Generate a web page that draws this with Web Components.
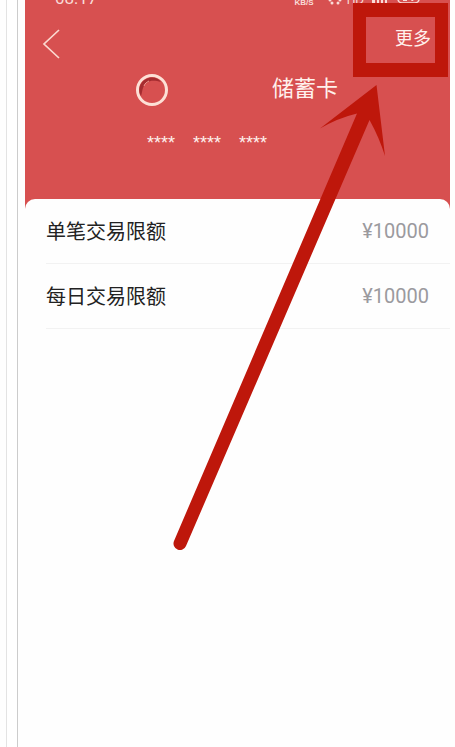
<!DOCTYPE html>
<html lang="zh-CN">
<head>
    <meta charset="UTF-8">
    <meta name="viewport" content="width=device-width, initial-scale=1.0">
    <title>储蓄卡</title>
    <style>
        body {
            margin: 0;
            background: #fefefe;
            font-family: "Liberation Sans", "Noto Sans CJK SC", sans-serif;
        }
    </style>
</head>
<body>
    <guide-page>
        <card-screen>
            <status-bar slot="header" time="08:17"></status-bar>
            <nav-bar slot="header" action="更多"></nav-bar>
            <bank-card slot="header" groups="3">储蓄卡</bank-card>
            <limit-row label="单笔交易限额" amount="¥10000"></limit-row>
            <limit-row label="每日交易限额" amount="¥10000"></limit-row>
        </card-screen>
        <guide-arrow slot="overlay"></guide-arrow>
    </guide-page>

    <script>
        // Outer frame with the two thin rules on the left
        class GuidePage extends HTMLElement {
            constructor() {
                super();
                this.attachShadow({ mode: 'open' }).innerHTML = `
                    <style>
                        :host {
                            display: flex;
                            box-sizing: border-box;
                            min-height: 100vh;
                            padding: 0 5px 0 6px;
                            overflow: hidden;
                        }
                        .rule {
                            box-sizing: border-box;
                            flex: none;
                            width: 12px;
                            margin-right: 7px;
                            border-left: 1px solid #e3e3e3;
                            border-right: 1px solid #cccccc;
                            background: #ffffff;
                        }
                        .content {
                            position: relative;
                            display: flex;
                            flex: 1;
                            min-width: 0;
                        }
                    </style>
                    <div class="rule"></div>
                    <div class="content">
                        <slot></slot>
                        <slot name="overlay"></slot>
                    </div>
                `;
            }
        }

        class CardScreen extends HTMLElement {
            constructor() {
                super();
                this.attachShadow({ mode: 'open' }).innerHTML = `
                    <style>
                        :host {
                            display: block;
                            flex: 1;
                            min-width: 0;
                        }
                        header {
                            background: #d75050;
                            padding-bottom: 54px;
                            overflow: hidden;
                        }
                        main {
                            margin-top: -10px;
                            border-radius: 10px 10px 0 0;
                            background: #fefefe;
                        }
                    </style>
                    <header><slot name="header"></slot></header>
                    <main><slot></slot></main>
                `;
            }
        }

        // Scrolled partly above the top edge
        class StatusBar extends HTMLElement {
            constructor() {
                super();
                this.attachShadow({ mode: 'open' });
            }

            connectedCallback() {
                this.shadowRoot.innerHTML = `
                    <style>
                        :host {
                            display: flex;
                            align-items: flex-end;
                            justify-content: space-between;
                            height: 24px;
                            margin-top: -16px;
                            padding: 0 30px;
                            color: #f9dcd8;
                        }
                        time {
                            font: 17px/20px Roboto, sans-serif;
                        }
                        .icons {
                            display: flex;
                            align-items: flex-end;
                            height: 24px;
                        }
                        .speed {
                            margin-right: 13px;
                            font: bold 8px/10px "Liberation Sans", sans-serif;
                        }
                        .hd {
                            margin: 0 8px 0 4px;
                            font: 12px/16px "Liberation Sans", sans-serif;
                        }
                        svg {
                            display: block;
                            fill: currentColor;
                        }
                    </style>
                    <time>${this.getAttribute('time')}</time>
                    <div class="icons">
                        <span class="speed">KB/S</span>
                        <svg width="16" height="16" viewBox="0 0 16 16">
                            <circle cx="3" cy="8" r="1.5"/>
                            <circle cx="13" cy="8" r="1.5"/>
                            <circle cx="5" cy="11" r="1.5"/>
                            <circle cx="11" cy="11" r="1.5"/>
                        </svg>
                        <span class="hd">HD</span>
                        <svg width="48" height="16" viewBox="0 0 48 16">
                            <path d="M0 8h3v3H0zM5 5h2v6H5zM9 3h2v8H9zM13 0h2v11h-2z"/>
                            <rect x="26" y="1" width="21" height="10" rx="4" fill="none" stroke="currentColor" stroke-width="1.5"/>
                            <path d="M31 5h4v4h-4zM38 5h5v1l-2 3h-2l2-3h-3z"/>
                        </svg>
                    </div>
                `;
            }
        }

        class NavBar extends HTMLElement {
            constructor() {
                super();
                this.attachShadow({ mode: 'open' });
            }

            connectedCallback() {
                this.shadowRoot.innerHTML = `
                    <style>
                        :host {
                            display: flex;
                            align-items: center;
                            justify-content: space-between;
                            height: 62px;
                            padding: 0 19px 0 17px;
                            color: #fff1ed;
                        }
                        button {
                            display: block;
                            margin: 0;
                            padding: 0 0 4px;
                            border: 0;
                            background: none;
                            color: inherit;
                            font: 18px/24px "Noto Sans CJK SC", sans-serif;
                        }
                        .back {
                            padding: 10px 0 0;
                        }
                        svg {
                            display: block;
                        }
                    </style>
                    <button class="back" aria-label="返回">
                        <svg width="20" height="32" viewBox="0 0 20 32">
                            <path d="M17 2 2 16l15 14" fill="none" stroke="#fbd9d0" stroke-width="1.7"/>
                        </svg>
                    </button>
                    <button>${this.getAttribute('action')}</button>
                `;
            }
        }

        class BankCard extends HTMLElement {
            constructor() {
                super();
                this.attachShadow({ mode: 'open' });
            }

            connectedCallback() {
                const groups = Number(this.getAttribute('groups'));

                this.shadowRoot.innerHTML = `
                    <style>
                        :host {
                            display: block;
                            padding: 0 112px 0 110px;
                            color: #fff1ed;
                        }
                        .title {
                            display: flex;
                            align-items: flex-start;
                            justify-content: space-between;
                            height: 37px;
                            margin-bottom: 24px;
                            font: 22px/32px "Noto Sans CJK SC", sans-serif;
                        }
                        .number {
                            display: flex;
                            gap: 18px;
                            padding-left: 12px;
                            font: 18px/24px "Liberation Sans", sans-serif;
                        }
                        svg {
                            display: block;
                            align-self: flex-end;
                        }
                    </style>
                    <div class="title">
                        <svg width="34" height="34" viewBox="0 0 34 34">
                            <circle cx="17" cy="17" r="14.5" fill="#d75050" stroke="#fde0d6" stroke-width="3"/>
                            <path d="M6 23C1 14 8 4.500 17 4.500c4 0 7 1.500 9 4.500-9-3-16-1-18 6-1 3-1 5-2 8z" fill="#a52c30"/>
                            <path d="M9 13c1-3 3-4 5-5" fill="none" stroke="#ef9990" stroke-width="1"/>
                        </svg>
                        <slot></slot>
                    </div>
                    <div class="number">${'<span>****</span>'.repeat(groups)}</div>
                `;
            }
        }

        class LimitRow extends HTMLElement {
            constructor() {
                super();
                this.attachShadow({ mode: 'open' });
            }

            connectedCallback() {
                this.shadowRoot.innerHTML = `
                    <style>
                        :host {
                            display: block;
                            padding-left: 21px;
                        }
                        .row {
                            display: flex;
                            align-items: center;
                            justify-content: space-between;
                            height: 64px;
                            padding-right: 21px;
                            border-bottom: 1px solid #f2f2f2;
                        }
                        .label {
                            color: #222222;
                            font: 20px/28px "Noto Sans CJK SC", sans-serif;
                        }
                        .amount {
                            color: #9b9a9e;
                            font: 20px/28px Roboto, sans-serif;
                        }
                    </style>
                    <div class="row">
                        <span class="label">${this.getAttribute('label')}</span>
                        <span class="amount">${this.getAttribute('amount')}</span>
                    </div>
                `;
            }
        }

        // Red box around the action and the arrow pointing at it
        class GuideArrow extends HTMLElement {
            constructor() {
                super();
                this.attachShadow({ mode: 'open' }).innerHTML = `
                    <style>
                        :host {
                            position: absolute;
                            top: 0;
                            right: 0;
                            pointer-events: none;
                        }
                        svg {
                            display: block;
                        }
                    </style>
                    <svg width="425" height="560" viewBox="25 0 425 560" fill="#be170b">
                        <path fill-rule="evenodd" d="M353 3h95v74h-95zM366 17v46h69V17z"/>
                        <path d="M376.500 85 320 128.500Q338 118 357 113.500L174 541a6.500 6.500 0 0 0 12 5L369.500 120Q379 137 385 156z"/>
                    </svg>
                `;
            }
        }

        customElements.define('guide-page', GuidePage);
        customElements.define('card-screen', CardScreen);
        customElements.define('status-bar', StatusBar);
        customElements.define('nav-bar', NavBar);
        customElements.define('bank-card', BankCard);
        customElements.define('limit-row', LimitRow);
        customElements.define('guide-arrow', GuideArrow);
    </script>
</body>
</html>
